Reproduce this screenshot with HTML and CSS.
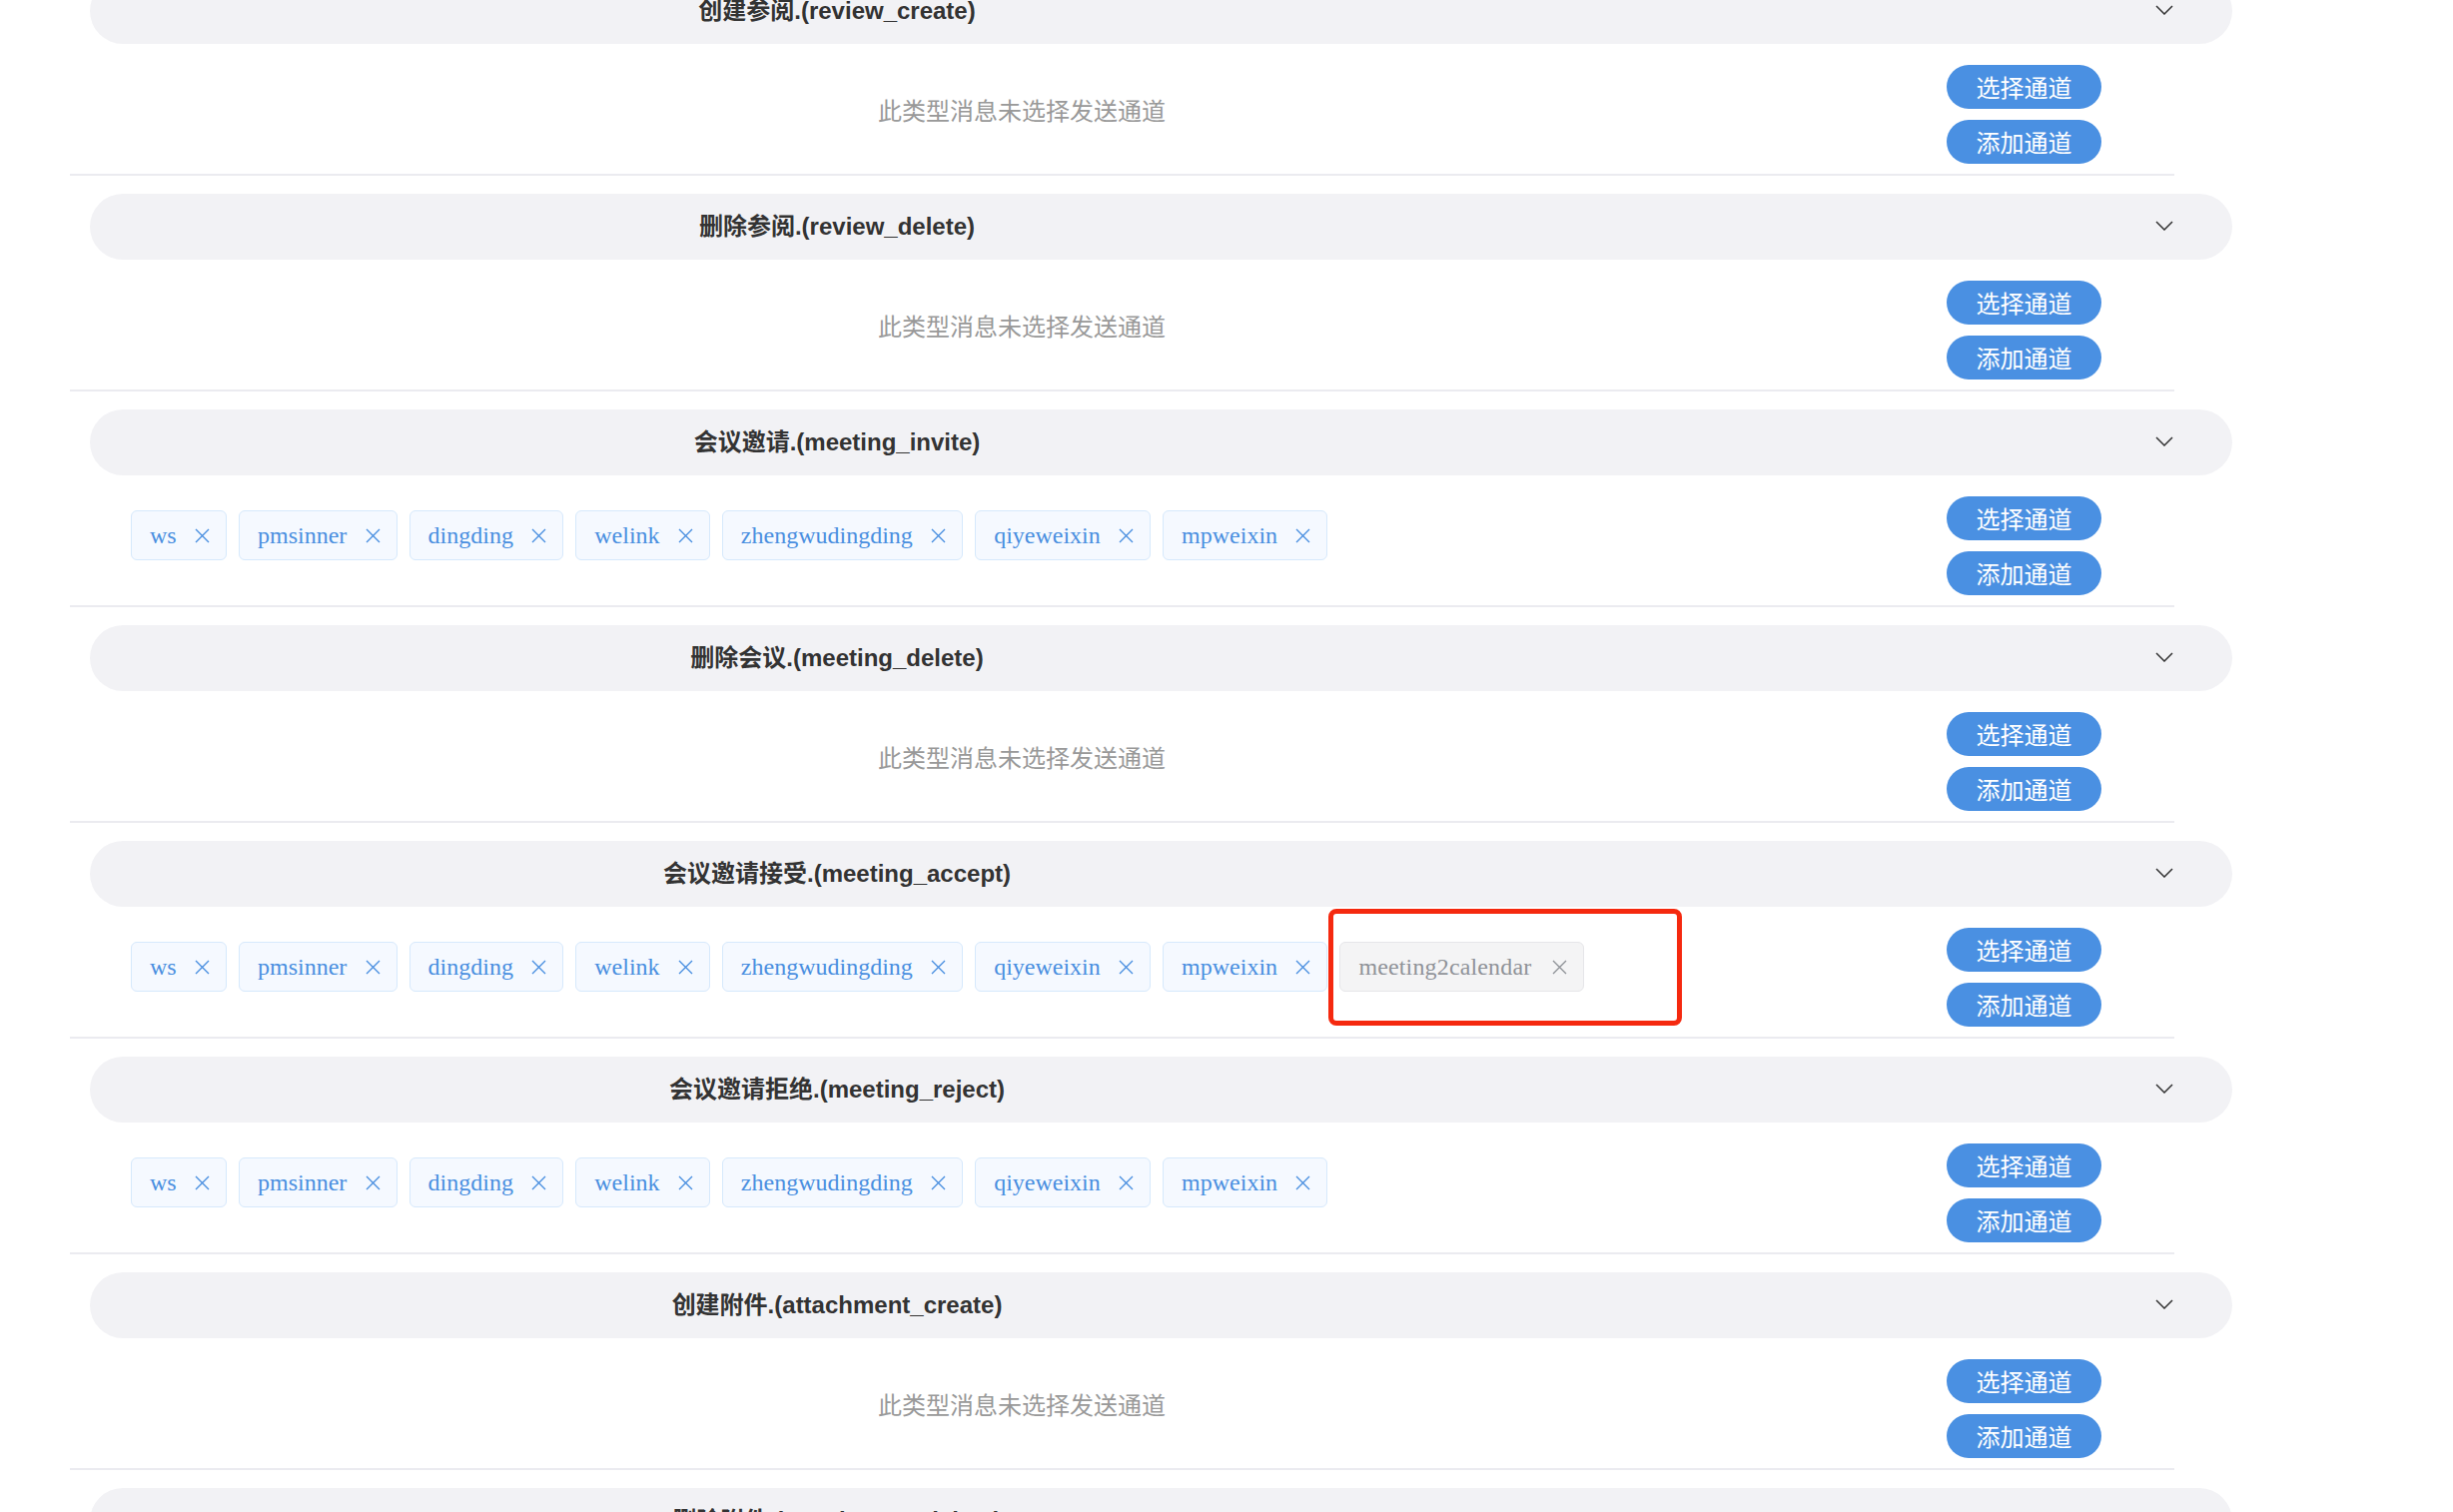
FILE: index.html
```html
<!DOCTYPE html>
<html lang="zh-CN">

<head>
    <meta charset="UTF-8">
    <title>消息通道配置</title>
    <link rel="stylesheet" href="styles.css">
</head>

<body>
    <div class="channel-list">

        <!-- review_create -->
        <div class="msg-type">
            <div class="msg-head">
                <span class="msg-title">创建参阅.(review_create)</span>
                <svg class="arrow" viewBox="0 0 18 10"><path d="M1 1 L9 9 L17 1" /></svg>
            </div>
            <div class="msg-body">
                <div class="empty">此类型消息未选择发送通道</div>
                <div class="btns">
                    <button class="btn">选择通道</button>
                    <button class="btn">添加通道</button>
                </div>
            </div>
        </div>

        <!-- review_delete -->
        <div class="msg-type">
            <div class="msg-head">
                <span class="msg-title">删除参阅.(review_delete)</span>
                <svg class="arrow" viewBox="0 0 18 10"><path d="M1 1 L9 9 L17 1" /></svg>
            </div>
            <div class="msg-body">
                <div class="empty">此类型消息未选择发送通道</div>
                <div class="btns">
                    <button class="btn">选择通道</button>
                    <button class="btn">添加通道</button>
                </div>
            </div>
        </div>

        <!-- meeting_invite -->
        <div class="msg-type">
            <div class="msg-head">
                <span class="msg-title">会议邀请.(meeting_invite)</span>
                <svg class="arrow" viewBox="0 0 18 10"><path d="M1 1 L9 9 L17 1" /></svg>
            </div>
            <div class="msg-body">
                <div class="channels">
                    <span class="tag">ws<svg viewBox="0 0 15 15"><path d="M1 1 L14 14 M14 1 L1 14" /></svg></span>
                    <span class="tag">pmsinner<svg viewBox="0 0 15 15"><path d="M1 1 L14 14 M14 1 L1 14" /></svg></span>
                    <span class="tag">dingding<svg viewBox="0 0 15 15"><path d="M1 1 L14 14 M14 1 L1 14" /></svg></span>
                    <span class="tag">welink<svg viewBox="0 0 15 15"><path d="M1 1 L14 14 M14 1 L1 14" /></svg></span>
                    <span class="tag">zhengwudingding<svg viewBox="0 0 15 15"><path d="M1 1 L14 14 M14 1 L1 14" /></svg></span>
                    <span class="tag">qiyeweixin<svg viewBox="0 0 15 15"><path d="M1 1 L14 14 M14 1 L1 14" /></svg></span>
                    <span class="tag">mpweixin<svg viewBox="0 0 15 15"><path d="M1 1 L14 14 M14 1 L1 14" /></svg></span>
                </div>
                <div class="btns">
                    <button class="btn">选择通道</button>
                    <button class="btn">添加通道</button>
                </div>
            </div>
        </div>

        <!-- meeting_delete -->
        <div class="msg-type">
            <div class="msg-head">
                <span class="msg-title">删除会议.(meeting_delete)</span>
                <svg class="arrow" viewBox="0 0 18 10"><path d="M1 1 L9 9 L17 1" /></svg>
            </div>
            <div class="msg-body">
                <div class="empty">此类型消息未选择发送通道</div>
                <div class="btns">
                    <button class="btn">选择通道</button>
                    <button class="btn">添加通道</button>
                </div>
            </div>
        </div>

        <!-- meeting_accept -->
        <div class="msg-type">
            <div class="msg-head">
                <span class="msg-title">会议邀请接受.(meeting_accept)</span>
                <svg class="arrow" viewBox="0 0 18 10"><path d="M1 1 L9 9 L17 1" /></svg>
            </div>
            <div class="msg-body">
                <div class="channels">
                    <span class="tag">ws<svg viewBox="0 0 15 15"><path d="M1 1 L14 14 M14 1 L1 14" /></svg></span>
                    <span class="tag">pmsinner<svg viewBox="0 0 15 15"><path d="M1 1 L14 14 M14 1 L1 14" /></svg></span>
                    <span class="tag">dingding<svg viewBox="0 0 15 15"><path d="M1 1 L14 14 M14 1 L1 14" /></svg></span>
                    <span class="tag">welink<svg viewBox="0 0 15 15"><path d="M1 1 L14 14 M14 1 L1 14" /></svg></span>
                    <span class="tag">zhengwudingding<svg viewBox="0 0 15 15"><path d="M1 1 L14 14 M14 1 L1 14" /></svg></span>
                    <span class="tag">qiyeweixin<svg viewBox="0 0 15 15"><path d="M1 1 L14 14 M14 1 L1 14" /></svg></span>
                    <span class="tag">mpweixin<svg viewBox="0 0 15 15"><path d="M1 1 L14 14 M14 1 L1 14" /></svg></span>
                    <!-- the one that is not enabled yet -->
                    <span class="tag tag-off marked">meeting2calendar<svg viewBox="0 0 15 15"><path d="M1 1 L14 14 M14 1 L1 14" /></svg></span>
                </div>
                <div class="btns">
                    <button class="btn">选择通道</button>
                    <button class="btn">添加通道</button>
                </div>
            </div>
        </div>

        <!-- meeting_reject -->
        <div class="msg-type">
            <div class="msg-head">
                <span class="msg-title">会议邀请拒绝.(meeting_reject)</span>
                <svg class="arrow" viewBox="0 0 18 10"><path d="M1 1 L9 9 L17 1" /></svg>
            </div>
            <div class="msg-body">
                <div class="channels">
                    <span class="tag">ws<svg viewBox="0 0 15 15"><path d="M1 1 L14 14 M14 1 L1 14" /></svg></span>
                    <span class="tag">pmsinner<svg viewBox="0 0 15 15"><path d="M1 1 L14 14 M14 1 L1 14" /></svg></span>
                    <span class="tag">dingding<svg viewBox="0 0 15 15"><path d="M1 1 L14 14 M14 1 L1 14" /></svg></span>
                    <span class="tag">welink<svg viewBox="0 0 15 15"><path d="M1 1 L14 14 M14 1 L1 14" /></svg></span>
                    <span class="tag">zhengwudingding<svg viewBox="0 0 15 15"><path d="M1 1 L14 14 M14 1 L1 14" /></svg></span>
                    <span class="tag">qiyeweixin<svg viewBox="0 0 15 15"><path d="M1 1 L14 14 M14 1 L1 14" /></svg></span>
                    <span class="tag">mpweixin<svg viewBox="0 0 15 15"><path d="M1 1 L14 14 M14 1 L1 14" /></svg></span>
                </div>
                <div class="btns">
                    <button class="btn">选择通道</button>
                    <button class="btn">添加通道</button>
                </div>
            </div>
        </div>

        <!-- attachment_create -->
        <div class="msg-type">
            <div class="msg-head">
                <span class="msg-title">创建附件.(attachment_create)</span>
                <svg class="arrow" viewBox="0 0 18 10"><path d="M1 1 L9 9 L17 1" /></svg>
            </div>
            <div class="msg-body">
                <div class="empty">此类型消息未选择发送通道</div>
                <div class="btns">
                    <button class="btn">选择通道</button>
                    <button class="btn">添加通道</button>
                </div>
            </div>
        </div>

        <!-- attachment_delete -->
        <div class="msg-type">
            <div class="msg-head">
                <span class="msg-title">删除附件.(attachment_delete)</span>
                <svg class="arrow" viewBox="0 0 18 10"><path d="M1 1 L9 9 L17 1" /></svg>
            </div>
            <div class="msg-body">
                <div class="empty">此类型消息未选择发送通道</div>
                <div class="btns">
                    <button class="btn">选择通道</button>
                    <button class="btn">添加通道</button>
                </div>
            </div>
        </div>

    </div>
</body>

</html>
```

FILE: styles.css
```css
body {
    margin: 0;
    background-color: #fff;
    font-family: "Liberation Sans", "Noto Sans CJK SC", sans-serif;
    overflow: hidden;
}

/* list is scrolled a little, first header is cut at the top */
.channel-list {
    margin: -22px 0 0 70px;
    width: 2165px;
}

.msg-type {
    margin-bottom: 18px;
}

.msg-head {
    display: flex;
    align-items: center;
    height: 66px;
    margin-left: 20px;
    padding-right: 59px;
    background-color: #f2f2f5;
    border-radius: 33px;
}

.msg-title {
    width: 1496px;
    padding-bottom: 5px;
    text-align: center;
    font-size: 24px;
    font-weight: bold;
    color: #333;
}

.arrow {
    margin-left: auto;
    margin-bottom: 2px;
    width: 18px;
    height: 10px;
    fill: none;
    stroke: #333;
    stroke-width: 1.5;
}

.msg-body {
    display: flex;
    align-items: center;
    width: 2107px;
    height: 130px;
    border-bottom: 2px solid #ebebf0;
}

.empty {
    flex: 1;
    padding-left: 61px;
    margin-right: 34px;
    text-align: center;
    font-family: "Noto Sans CJK SC", sans-serif;
    font-size: 24px;
    color: #999;
}

.channels {
    flex: 1;
    display: flex;
    flex-wrap: wrap;
    gap: 12px;
    padding-left: 61px;
    margin-right: 34px;
    margin-bottom: 10px;
}

.btns {
    display: flex;
    flex-direction: column;
    gap: 11px;
    margin: 10px 73px 0 0;
}

.btn {
    width: 155px;
    height: 44px;
    padding: 0;
    border: none;
    border-radius: 22px;
    background-color: #4a90e2;
    color: #fff;
    font-family: "Noto Sans CJK SC", sans-serif;
    font-size: 24px;
}

.tag {
    display: inline-flex;
    align-items: center;
    height: 50px;
    box-sizing: border-box;
    padding: 0 16px 0 18px;
    border: 1px solid #d6e9fc;
    border-radius: 6px;
    background-color: #f5f9ff;
    color: #4a8fe0;
    font-family: "Liberation Serif", serif;
    font-size: 24px;
}

.tag svg {
    width: 15px;
    height: 15px;
    margin-left: 18.3px;
    fill: none;
    stroke: currentColor;
    stroke-width: 1.4;
}

.tag-off {
    background-color: #f4f4f5;
    border-color: #e6e6e9;
    color: #909399;
    letter-spacing: 0.15px;
}

.tag-off svg {
    margin-left: 21px;
}

/* red highlight round the new channel */
.marked {
    position: relative;
}

.marked::after {
    content: "";
    position: absolute;
    top: -34px;
    left: -12px;
    width: 354px;
    height: 117px;
    box-sizing: border-box;
    border: 5px solid #f5290f;
    border-radius: 8px;
}
```
